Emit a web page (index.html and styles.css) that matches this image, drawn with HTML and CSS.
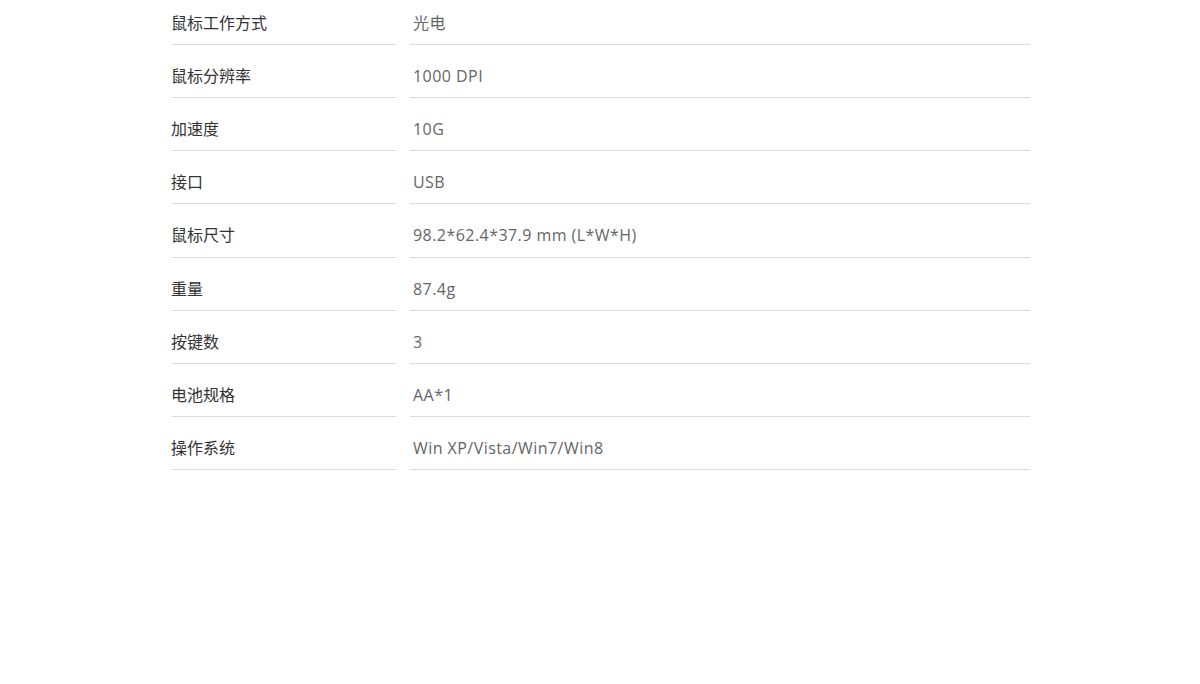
FILE: index.html
```html
<!DOCTYPE html>
<html lang="zh-CN">
<head>
<meta charset="utf-8">
<link rel="stylesheet" href="styles.css">
</head>
<body>
<div class="specs">
  <div class="row"><div class="label">鼠标工作方式</div><div class="value">光电</div></div>
  <div class="row"><div class="label">鼠标分辨率</div><div class="value">1000 DPI</div></div>
  <div class="row"><div class="label">加速度</div><div class="value">10G</div></div>
  <div class="row"><div class="label">接口</div><div class="value">USB</div></div>
  <div class="row"><div class="label">鼠标尺寸</div><div class="value">98.2*62.4*37.9 mm (L*W*H)</div></div>
  <div class="row"><div class="label">重量</div><div class="value">87.4g</div></div>
  <div class="row"><div class="label">按键数</div><div class="value">3</div></div>
  <div class="row"><div class="label">电池规格</div><div class="value">AA*1</div></div>
  <div class="row"><div class="label">操作系统</div><div class="value">Win XP/Vista/Win7/Win8</div></div>
</div>
</body>
</html>
```
FILE: styles.css
```css
html, body {
  margin: 0;
  padding: 0;
  background: #fff;
}
body {
  font-family: "Open Sans", "Noto Sans CJK SC", sans-serif;
  font-size: 16px;
}
.specs {
  width: 859px;
  margin: -8.125px 0 0 171px;
  display: flex;
  flex-direction: column;
}
.row {
  display: flex;
  gap: 13px;
}
.label, .value {
  padding: 20px 0 10.125px 0;
  line-height: 22px;
  border-bottom: 1px solid #dcdcdc;
}
.label {
  width: 226px;
  color: #333;
}
.value {
  width: 617px;
  padding-left: 3px;
  color: #666;
  letter-spacing: 0.45px;
}
```
